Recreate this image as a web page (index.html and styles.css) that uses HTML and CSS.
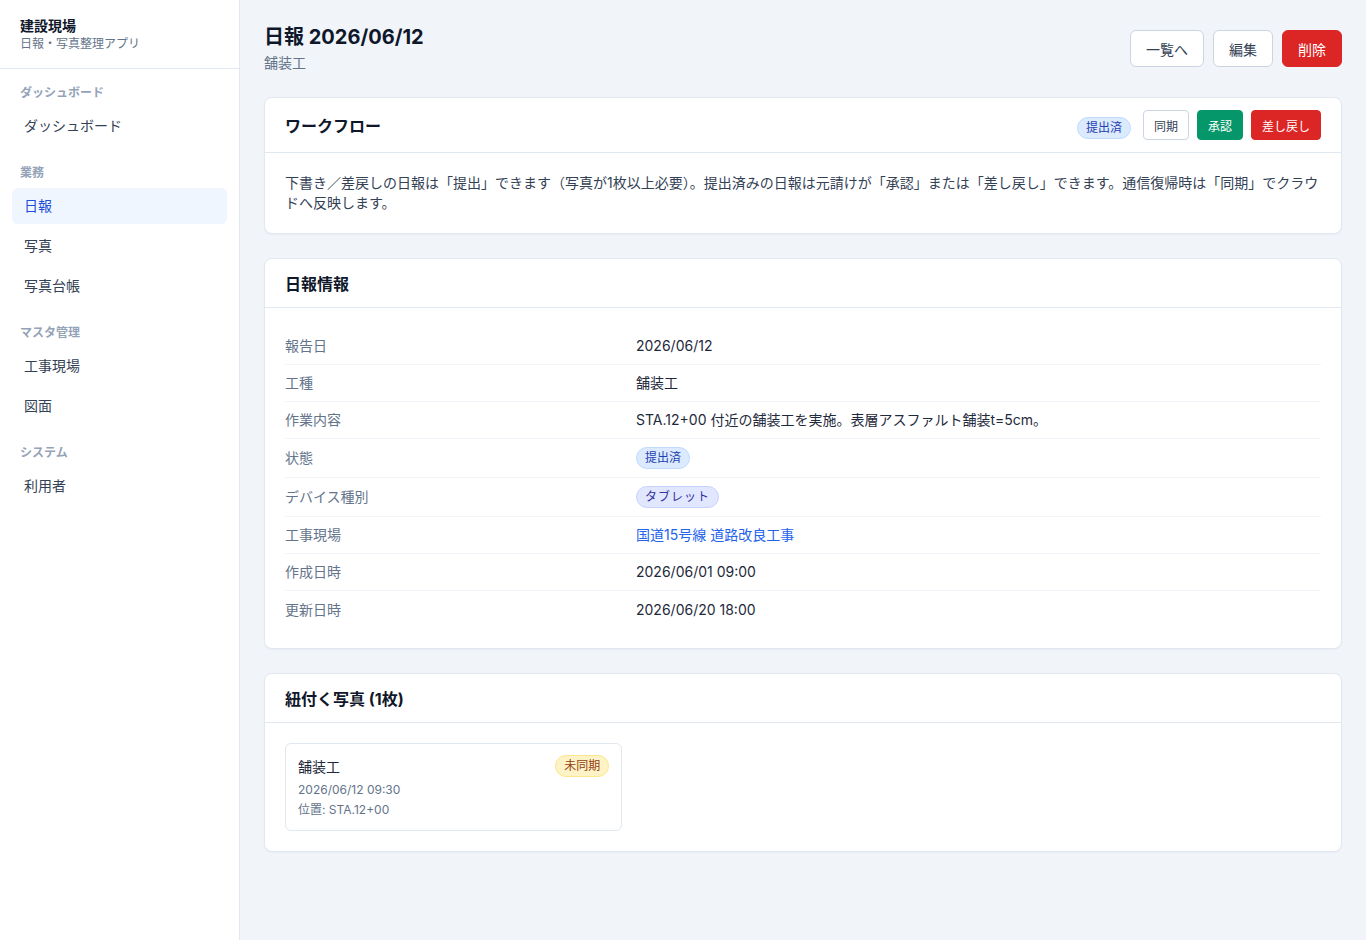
FILE: index.html
```html
<!DOCTYPE html>
<html lang="ja">
<head>
    <meta charset="UTF-8">
    <title>日報 2026/06/12</title>
    <link rel="stylesheet" href="styles.css">
</head>
<body>
    <div class="layout">
        <aside class="sidebar">
            <div class="brand">
                <div class="brand-title">建設現場</div>
                <div class="brand-sub">日報・写真整理アプリ</div>
            </div>
            <nav class="nav">
                <div class="nav-group">ダッシュボード</div>
                <a class="nav-item" href="#">ダッシュボード</a>

                <div class="nav-group">業務</div>
                <a class="nav-item active" href="#">日報</a>
                <a class="nav-item" href="#">写真</a>
                <a class="nav-item" href="#">写真台帳</a>

                <div class="nav-group">マスタ管理</div>
                <a class="nav-item" href="#">工事現場</a>
                <a class="nav-item" href="#">図面</a>

                <div class="nav-group">システム</div>
                <a class="nav-item" href="#">利用者</a>
            </nav>
        </aside>

        <main class="main">
            <div class="page-head">
                <div>
                    <h1 class="page-title">日報 2026/06/12</h1>
                    <div class="page-sub">舗装工</div>
                </div>
                <div class="actions">
                    <button class="btn">一覧へ</button>
                    <button class="btn">編集</button>
                    <button class="btn btn-danger">削除</button>
                </div>
            </div>

            <!-- workflow -->
            <section class="card">
                <div class="card-head card-head-wf">
                    <h2 class="card-title">ワークフロー</h2>
                    <div class="wf-actions">
                        <span class="badge badge-blue">提出済</span>
                        <button class="btn btn-sm">同期</button>
                        <button class="btn btn-sm btn-success">承認</button>
                        <button class="btn btn-sm btn-danger">差し戻し</button>
                    </div>
                </div>
                <div class="card-body">
                    <p class="note">下書き／差戻しの日報は「提出」できます（写真が1枚以上必要）。提出済みの日報は元請けが「承認」または「差し戻し」できます。通信復帰時は「同期」でクラウドへ反映します。</p>
                </div>
            </section>

            <!-- info -->
            <section class="card">
                <div class="card-head">
                    <h2 class="card-title">日報情報</h2>
                </div>
                <div class="card-body">
                    <dl class="info">
                        <div class="info-row">
                            <dt>報告日</dt>
                            <dd>2026/06/12</dd>
                        </div>
                        <div class="info-row">
                            <dt>工種</dt>
                            <dd>舗装工</dd>
                        </div>
                        <div class="info-row">
                            <dt>作業内容</dt>
                            <dd>STA.12+00 付近の舗装工を実施。表層アスファルト舗装t=5cm。</dd>
                        </div>
                        <div class="info-row">
                            <dt>状態</dt>
                            <dd><span class="badge badge-blue">提出済</span></dd>
                        </div>
                        <div class="info-row">
                            <dt>デバイス種別</dt>
                            <dd><span class="badge badge-indigo">タブレット</span></dd>
                        </div>
                        <div class="info-row">
                            <dt>工事現場</dt>
                            <dd><a class="link" href="#">国道15号線 道路改良工事</a></dd>
                        </div>
                        <div class="info-row">
                            <dt>作成日時</dt>
                            <dd>2026/06/01 09:00</dd>
                        </div>
                        <div class="info-row">
                            <dt>更新日時</dt>
                            <dd>2026/06/20 18:00</dd>
                        </div>
                    </dl>
                </div>
            </section>

            <!-- photos -->
            <section class="card">
                <div class="card-head">
                    <h2 class="card-title">紐付く写真 (1枚)</h2>
                </div>
                <div class="card-body">
                    <div class="photo-grid">
                        <div class="photo">
                            <div class="photo-top">
                                <span class="photo-title">舗装工</span>
                                <span class="badge badge-yellow">未同期</span>
                            </div>
                            <div class="photo-meta">2026/06/12 09:30</div>
                            <div class="photo-meta">位置: STA.12+00</div>
                        </div>
                    </div>
                </div>
            </section>
        </main>
    </div>
</body>
</html>
```

FILE: styles.css
```css
* {
    box-sizing: border-box;
}

body {
    margin: 0;
    font-family: "Inter", "Noto Sans CJK JP", sans-serif;
    font-size: 14px;
    color: #1e293b;
    background: #f1f4f9;
}

.layout {
    display: flex;
    min-height: 940px;
}

/* sidebar */
.sidebar {
    width: 240px;
    flex-shrink: 0;
    background: #fff;
    border-right: 1px solid #e2e8f0;
}

.brand {
    padding: 16px 20px 0;
    height: 69px;
    border-bottom: 1px solid #e2e8f0;
}

.brand-title {
    font-size: 14px;
    font-weight: 700;
    color: #0f172a;
    line-height: 20px;
}

.brand-sub {
    font-size: 12px;
    color: #64748b;
    line-height: 16px;
}

.nav {
    display: flex;
    flex-direction: column;
    gap: 4px;
    padding: 16px 12px;
}

.nav-group {
    font-size: 12px;
    font-weight: 700;
    color: #94a3b8;
    line-height: 16px;
    padding: 0 8px;
    margin-bottom: 3px;
}

.nav-item + .nav-group {
    margin-top: 17px;
}

.nav-item {
    display: block;
    height: 36px;
    line-height: 36px;
    padding: 0 12px;
    border-radius: 6px;
    color: #334155;
    text-decoration: none;
    font-size: 14px;
}

.nav-item.active {
    background: #eff6ff;
    color: #1d4ed8;
}

/* main */
.main {
    flex: 1;
    padding: 22px 24px 40px;
    display: flex;
    flex-direction: column;
    gap: 24px;
}

.page-head {
    display: flex;
    justify-content: space-between;
    align-items: flex-start;
}

.page-title {
    margin: 0;
    font-size: 20px;
    font-weight: 700;
    line-height: 30px;
    color: #0f172a;
}

.page-sub {
    font-size: 14px;
    color: #64748b;
    line-height: 20px;
    margin-top: 1px;
}

.actions {
    display: flex;
    gap: 9px;
    margin-top: 8px;
}

.btn {
    font-family: inherit;
    font-size: 14px;
    height: 37px;
    padding: 0 15px;
    background: #fff;
    border: 1px solid #cbd5e1;
    border-radius: 6px;
    color: #334155;
    cursor: pointer;
}

.btn-danger {
    background: #dc2626;
    border-color: #dc2626;
    color: #fff;
}

.btn-success {
    background: #059669;
    border-color: #059669;
    color: #fff;
}

.btn-sm {
    font-size: 12px;
    height: 30px;
    padding: 0 10px;
    border-radius: 4px;
}

/* cards */
.card {
    background: #fff;
    border: 1px solid #e2e8f0;
    border-radius: 8px;
    box-shadow: 0 1px 2px rgba(15, 23, 42, 0.04);
}

.card-head {
    display: flex;
    justify-content: space-between;
    align-items: center;
    min-height: 49px;
    padding: 0 20px;
    border-bottom: 1px solid #e2e8f0;
}

.card-head-wf {
    min-height: 55px;
}

.card-title {
    margin: 0;
    font-size: 16px;
    font-weight: 700;
    color: #0f172a;
}

.wf-actions {
    display: flex;
    align-items: center;
    gap: 8px;
}

.wf-actions .badge {
    margin-right: 4px;
    margin-top: 5px;
}

.card-body {
    padding: 20px;
}

.note {
    margin: 0;
    font-size: 14px;
    line-height: 20px;
    color: #334155;
}

/* info list */
.info {
    margin: 0;
}

.info-row {
    display: grid;
    grid-template-columns: 351px 1fr;
    align-items: center;
    min-height: 37px;
    padding: 8px 0;
    border-bottom: 1px solid #f1f5f9;
}

.info-row:last-child {
    border-bottom: none;
}

.info-row dt {
    color: #64748b;
    line-height: 20px;
}

.info-row dd {
    margin: 0;
    line-height: 20px;
    color: #1e293b;
}

.link {
    color: #2563eb;
    text-decoration: none;
}

.badge {
    display: inline-block;
    font-size: 12px;
    line-height: 16px;
    padding: 2px 8px;
    border-radius: 999px;
    border: 1px solid transparent;
}

.badge-blue {
    background: #dbeafe;
    border-color: #bfdbfe;
    color: #1e40af;
}

.badge-indigo {
    background: #e0e7ff;
    border-color: #c7d2fe;
    color: #3730a3;
    letter-spacing: 1px;
}

.badge-yellow {
    background: #fef3c7;
    border-color: #fde68a;
    color: #92400e;
}

/* photos */
.photo-grid {
    display: grid;
    grid-template-columns: repeat(3, 1fr);
    gap: 12px;
}

.photo {
    border: 1px solid #e2e8f0;
    border-radius: 6px;
    padding: 11px 12px 10px;
}

.photo-top {
    display: flex;
    justify-content: space-between;
    align-items: center;
    margin-bottom: 3px;
}

.photo-title {
    font-size: 14px;
    color: #1e293b;
}

.photo-meta {
    font-size: 12px;
    color: #64748b;
    line-height: 20px;
}
```
